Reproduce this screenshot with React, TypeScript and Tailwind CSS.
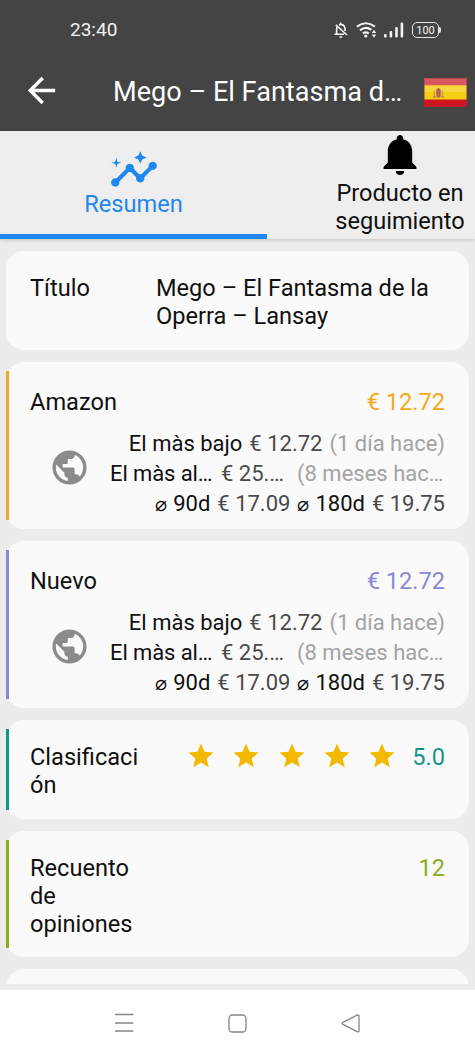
import type { ReactNode } from 'react';
import { MdArrowBack, MdInsights, MdPublic, MdStar } from 'react-icons/md';

interface PriceCardProps {
  name: string;
  price: string;
  bar: string;
  color: string;
}

function StatusBar() {
  return (
    <div className="flex h-[60px] items-center justify-between pl-[70px] pr-[34px] text-[#f2f2f2]">
      <span className="text-[19px]">23:40</span>
      <div className="flex items-center">
        <svg className="h-4 w-[14px]" viewBox="0 0 14 16" fill="none" stroke="#f2f2f2" strokeWidth="1.6">
          <path d="M2.6 12V7.5Q2.6 5.5 3.6 4.4M5 3Q6 2.4 7 2.4Q11 3 11 7.2V9M.5 12.3H10M6.6 .4V2.4M5.4 15H8.2" />
          <path d="M1.8 2.8L13 13" />
        </svg>
        <svg className="ml-[8px] h-4 w-[21px]" viewBox="0 0 21 16" fill="none" stroke="#f2f2f2" strokeWidth="2.1">
          <path d="M.9 4.7Q9.9-2.2 18.9 4.7M3.9 8.3Q9.9 3.6 15.4 7.9M6.9 11.5Q9.9 9.2 12.8 11.5" />
          <circle cx="9.8" cy="14" r="1.6" fill="#f2f2f2" stroke="none" />
          <path d="M15.8 11L18 7.8L20.2 11ZM15.8 12.5L18 15.7L20.2 12.5Z" fill="#f2f2f2" stroke="none" />
        </svg>
        <svg className="ml-[7px] h-4 w-5" viewBox="0 0 20 16" fill="#f2f2f2">
          <rect x="0" y="12" width="2.6" height="3.5" rx="1" />
          <rect x="5.6" y="9" width="2.6" height="6.5" rx="1" />
          <rect x="11.2" y="5" width="2.6" height="10.5" rx="1" />
          <rect x="16.6" y="0.5" width="2.6" height="15" rx="1" />
        </svg>
        <span className="ml-[8px] flex h-4 w-[27px] items-center justify-center rounded-[5px] border-[1.5px] border-[#e4e4e4] text-[11px] leading-none">
          100
        </span>
        <span className="h-[6px] w-[2px] rounded-r-sm bg-[#e4e4e4]" />
      </div>
    </div>
  );
}

function SpainFlag() {
  return (
    <svg className="h-[29px] w-[43px]" viewBox="0 0 43 29">
      <rect width="43" height="29" rx="1" fill="#f6cf13" />
      <path d="M0 0H43V7.5H0Z" fill="#d8595f" />
      <path d="M0 21.5H43V29H0Z" fill="#cd1420" />
      <path d="M0 7.5H43V14H0Z" fill="#f8d63f" />
      <path d="M12.3 11.8L14.5 9.8L16.7 11.8V18.5L14.5 20L12.3 18.5Z" fill="#b8604b" />
      <path d="M10.5 12.5V19M18.5 12.5V19" stroke="#c79a5c" strokeWidth="1.4" />
      <path d="M9 19H12M17 19H20M12 14H17" stroke="#9d7560" />
      <rect x=".5" y=".5" width="42" height="28" rx="1" fill="none" stroke="#9b3238" strokeOpacity=".5" />
    </svg>
  );
}

function BellIcon() {
  return (
    <svg className="h-10 w-[34px]" viewBox="0 0 34 40">
      <path d="M17 0C15.2 0 13.8 1.4 13.8 3.2V4.2C8.2 5.6 4.8 10.2 4.8 16.5V27.5L0.5 32V34H33.5V32L29.2 27.5V16.5C29.2 10.2 25.8 5.6 20.2 4.2V3.2C20.2 1.4 18.8 0 17 0Z" />
      <path d="M12.8 36H21.2C21.2 38.4 19.4 40 17 40S12.8 38.4 12.8 36Z" />
    </svg>
  );
}

function Card({ bar, className, children }: { bar?: string; className: string; children?: ReactNode }) {
  return (
    <section className={`relative shrink-0 rounded-[18px] bg-[#fafafa] px-6 ${className}`}>
      {bar && <span className={`absolute bottom-[9px] left-0 top-[9px] w-[3px] ${bar}`} />}
      {children}
    </section>
  );
}

function Average({ days }: { days: string }) {
  return (
    <span className="flex text-[#101010]">
      <span className="mr-[6px] text-[20px]">⌀</span>
      {days}
    </span>
  );
}

function PriceCard({ name, price, bar, color }: PriceCardProps) {
  return (
    <Card bar={bar} className="h-[167px] pt-[26px]">
      <div className="flex justify-between">
        <span>{name}</span>
        <span className={color}>{price}</span>
      </div>
      <div className="mt-[13px] flex items-start justify-between">
        <MdPublic className="ml-[19px] mt-[18px] size-[41px] text-[#8b8b8b]" />
        <div className="flex flex-col items-end whitespace-nowrap text-[22px] leading-[30px] text-[#4a4a4a]">
          <p className="flex gap-[7px]">
            <span className="text-[#101010]">El màs bajo</span>
            <span>€ 12.72</span>
            <span className="text-[#a3a3a3]">(1 día hace)</span>
          </p>
          <p className="flex">
            <span className="w-[111px] tracking-[-0.1px] text-[#101010]">El màs al…</span>
            <span className="w-[76px]">€ 25.…</span>
            <span className="w-[148px] text-[#a3a3a3]">(8 meses hac…</span>
          </p>
          <p className="flex gap-[7px]">
            <Average days="90d" />
            <span>€ 17.09</span>
            <Average days="180d" />
            <span>€ 19.75</span>
          </p>
        </div>
      </div>
    </Card>
  );
}

export default function App() {
  return (
    <div className="flex h-[1056px] w-[475px] flex-col overflow-hidden bg-[#ececec] font-[Roboto,sans-serif] text-[23.6px] leading-7 text-[#101010]">
      <header className="h-[131px] shrink-0 bg-[#444444]">
        <StatusBar />
        <div className="flex h-[64px] items-center pl-[21px] pr-[8px] text-white">
          <MdArrowBack className="-mt-[3px] size-[41px]" />
          <h1 className="ml-[51px] flex-1 whitespace-nowrap text-[27.1px]">Mego – El Fantasma d…</h1>
          <SpainFlag />
        </div>
      </header>

      <nav className="relative z-10 flex h-[108px] shrink-0 bg-[#eeeeee] shadow-[0_1px_4px_rgba(0,0,0,0.18)]">
        <button className="flex w-[267px] shrink-0 flex-col items-center border-b-5 border-[#1e88ee] pt-[14px] text-[#1e88ee]">
          <MdInsights className="size-[50px]" />
          <span className="-mt-[5px]">Resumen</span>
        </button>
        <button className="flex w-[266px] shrink-0 flex-col items-center pt-1">
          <BellIcon />
          <span className="mt-1 w-[140px]">Producto en seguimiento</span>
        </button>
      </nav>

      <main className="flex h-[745px] shrink-0 flex-col gap-[12px] overflow-hidden px-[6px] pt-[12px]">
        <Card className="h-[99px] pr-0 pt-[23px]">
          <div className="flex">
            <span className="w-[126px] shrink-0">Título</span>
            <span className="w-[290px]">Mego – El Fantasma de la Operra – Lansay</span>
          </div>
        </Card>
        <PriceCard name="Amazon" price="€ 12.72" bar="bg-[#eaa92a]" color="text-[#f5a81c]" />
        <PriceCard name="Nuevo" price="€ 12.72" bar="bg-[#8888d6]" color="text-[#8888d8]" />
        <Card bar="bg-[#159588]" className="h-[99px] pt-[23px]">
          <div className="flex items-start">
            <span className="w-[115px] shrink-0">Clasificaci<br />ón</span>
            <div className="ml-auto mr-[15px] mt-[-2px] flex gap-[15.3px] text-[#f3b900]">
              {[1, 2, 3, 4, 5].map(star => <MdStar key={star} className="size-[30px]" />)}
            </div>
            <span className="text-[#159588]">5.0</span>
          </div>
        </Card>
        <Card bar="bg-[#8aae20]" className="h-[126px] pt-[23px]">
          <div className="flex justify-between">
            <span className="w-[115px]">Recuento<br />de opiniones</span>
            <span className="text-[#8aae20]">12</span>
          </div>
        </Card>
        <Card className="h-[99px]" />
      </main>

      <footer className="mt-[6px] flex h-[66px] shrink-0 items-center bg-white pl-[114px] text-[#858585]">
        <svg className="h-5 w-[20px]" viewBox="0 0 20 20" stroke="currentColor" strokeWidth="1.3">
          <path d="M1 1.5H19.5M1 10H19.5M1 18H19.5" />
        </svg>
        <svg className="ml-[94px] size-[19px]" viewBox="0 0 19 19" fill="none" stroke="currentColor" strokeWidth="1.3">
          <rect x="1" y="1" width="17" height="17" rx="3.5" />
        </svg>
        <svg className="ml-[94px] size-[19px]" viewBox="0 0 19 19" fill="none" stroke="currentColor" strokeWidth="1.3" strokeLinejoin="round">
          <path d="M2 8.4L16 1.2Q18 .5 18 2.5V16.5Q18 18.5 16 17.6L2 10.4Q.5 9.4 2 8.4Z" />
        </svg>
      </footer>
    </div>
  );
}
